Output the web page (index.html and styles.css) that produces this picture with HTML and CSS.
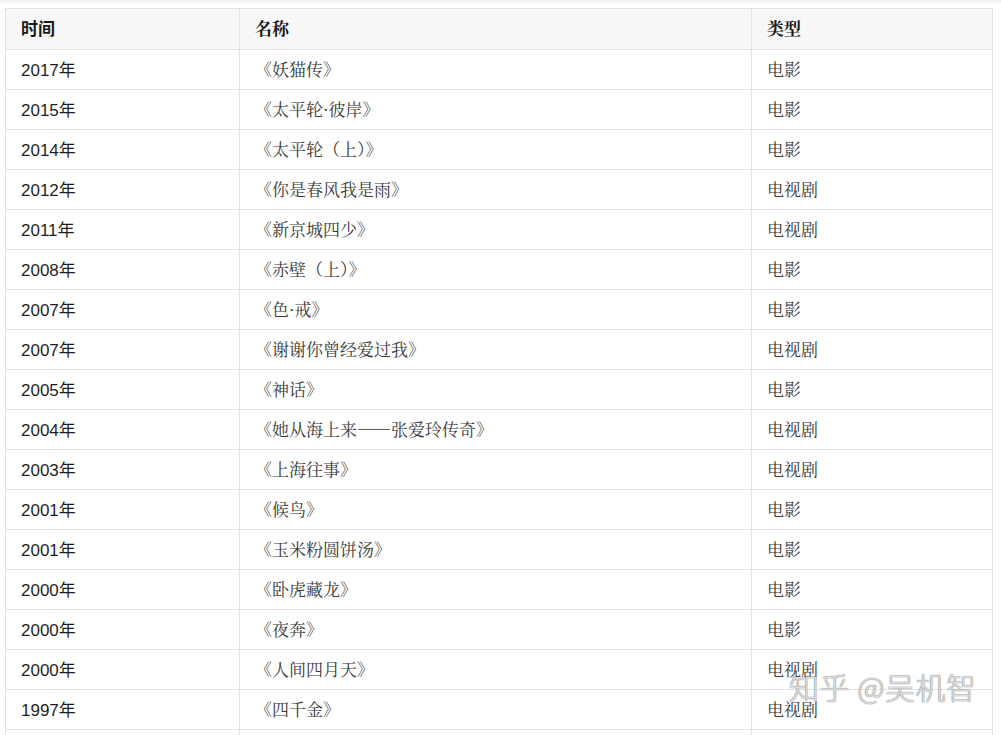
FILE: index.html
```html
<!DOCTYPE html>
<html lang="zh-CN">
<head>
<meta charset="utf-8">
<title>作品列表</title>
<link rel="stylesheet" href="styles.css">
</head>
<body>
<div class="page">
  <table class="works">
    <colgroup>
      <col class="c-year">
      <col class="c-name">
      <col class="c-type">
    </colgroup>
    <thead>
      <tr><th>时间</th><th>名称</th><th>类型</th></tr>
    </thead>
    <tbody>
      <tr><td class="year">2017年</td><td class="name">《妖猫传》</td><td class="name">电影</td></tr>
      <tr><td class="year">2015年</td><td class="name">《太平轮·彼岸》</td><td class="name">电影</td></tr>
      <tr><td class="year">2014年</td><td class="name">《太平轮（上）》</td><td class="name">电影</td></tr>
      <tr><td class="year">2012年</td><td class="name">《你是春风我是雨》</td><td class="name">电视剧</td></tr>
      <tr><td class="year">2011年</td><td class="name">《新京城四少》</td><td class="name">电视剧</td></tr>
      <tr><td class="year">2008年</td><td class="name">《赤壁（上）》</td><td class="name">电影</td></tr>
      <tr><td class="year">2007年</td><td class="name">《色·戒》</td><td class="name">电影</td></tr>
      <tr><td class="year">2007年</td><td class="name">《谢谢你曾经爱过我》</td><td class="name">电视剧</td></tr>
      <tr><td class="year">2005年</td><td class="name">《神话》</td><td class="name">电影</td></tr>
      <tr><td class="year">2004年</td><td class="name">《她从海上来——张爱玲传奇》</td><td class="name">电视剧</td></tr>
      <tr><td class="year">2003年</td><td class="name">《上海往事》</td><td class="name">电视剧</td></tr>
      <tr><td class="year">2001年</td><td class="name">《候鸟》</td><td class="name">电影</td></tr>
      <tr><td class="year">2001年</td><td class="name">《玉米粉圆饼汤》</td><td class="name">电影</td></tr>
      <tr><td class="year">2000年</td><td class="name">《卧虎藏龙》</td><td class="name">电影</td></tr>
      <tr><td class="year">2000年</td><td class="name">《夜奔》</td><td class="name">电影</td></tr>
      <tr><td class="year">2000年</td><td class="name">《人间四月天》</td><td class="name">电视剧</td></tr>
      <tr><td class="year">1997年</td><td class="name">《四千金》</td><td class="name">电视剧</td></tr>
      <tr><td class="year">&nbsp;</td><td class="name">&nbsp;</td><td class="name">&nbsp;</td></tr>
    </tbody>
  </table>
  <div class="watermark">知乎 @吴机智</div>
</div>
</body>
</html>
```
FILE: styles.css
```css
html, body {
  margin: 0;
  padding: 0;
  background: #ffffff;
  overflow: hidden;
}

.page {
  position: relative;
  padding: 8px 0 0 5px;
  height: 735px;
  box-sizing: border-box;
  background: linear-gradient(#ececec 0, #ffffff 4px);
}

.works {
  border-collapse: collapse;
  width: 987px;
  table-layout: fixed;
  background: #fff;
  font-size: 17px;
  color: #2b2b2b;
}

.c-year { width: 234px; }
.c-name { width: 512px; }
.c-type { width: 241px; }

.works th,
.works td {
  border: 1px solid #e3e3e3;
  height: 40px;
  padding: 0 16px 3px 15px;
  text-align: left;
  vertical-align: middle;
  white-space: nowrap;
  box-sizing: border-box;
}

.works th {
  background: #f7f7f7;
  height: 41px;
  font-family: "Noto Serif CJK SC", "Noto Sans CJK SC", serif;
  font-weight: 700;
  color: #1a1a1a;
}

.works th:first-child {
  font-family: "Noto Sans CJK SC", sans-serif;
}

.year {
  font-family: "Liberation Sans", "Noto Sans CJK SC", sans-serif;
  color: #1f1f1f;
}

.name {
  font-family: "Noto Serif CJK SC", "Noto Sans CJK SC", serif;
  color: #3a3a3a;
}

.watermark {
  position: absolute;
  left: 789px;
  top: 664px;
  font-family: "Noto Sans CJK SC", sans-serif;
  font-size: 30px;
  font-weight: 300;
  letter-spacing: 0.5px;
  color: rgba(255, 255, 255, 0.8);
  text-shadow: 0 0 1px rgba(80, 80, 80, 0.95), 0 0 1px rgba(120, 120, 120, 0.6);
}
```
